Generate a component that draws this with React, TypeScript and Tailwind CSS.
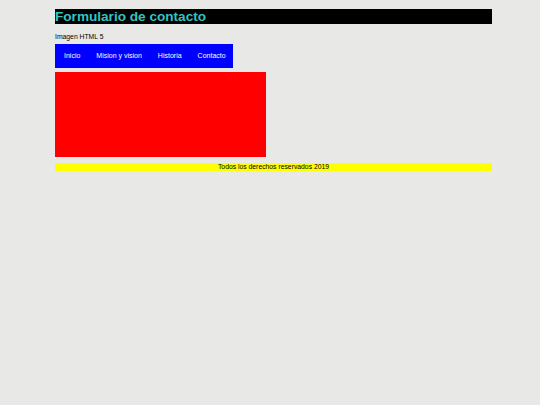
import React from 'react';

const links = ['Inicio', 'Mision y vision', 'Historia', 'Contacto'];

export default function App() {
  return (
    <div className="min-h-[405px] bg-[#e8e9e6] pt-[9px] pl-[55px] font-['Liberation_Sans',Arial,sans-serif] text-black">
      <div className="w-[437px]">
        <h1 className="h-[15px] bg-black text-[13.6px] font-bold leading-[15px] text-[#33c3c3]">
          Formulario de contacto
        </h1>
        <p className="mt-[8px] text-[6.8px] leading-[9px]">Imagen HTML 5</p>
        <nav className="mt-[3px] flex h-[24px] w-[178px] items-center bg-[#0000ff] pl-[9px] text-[7px] text-white">
          <ul className="flex gap-[16px]">
            {links.map((l) => (
              <li key={l}>{l}</li>
            ))}
          </ul>
        </nav>
        <div className="mt-[4px] h-[85px] w-[211px] bg-[#ff0000]" />
        <footer className="mt-[6px] h-[8px] bg-[#ffff00] text-center text-[6.8px] leading-[8px]">
          Todos los derechos reservados 2019
        </footer>
      </div>
    </div>
  );
}
